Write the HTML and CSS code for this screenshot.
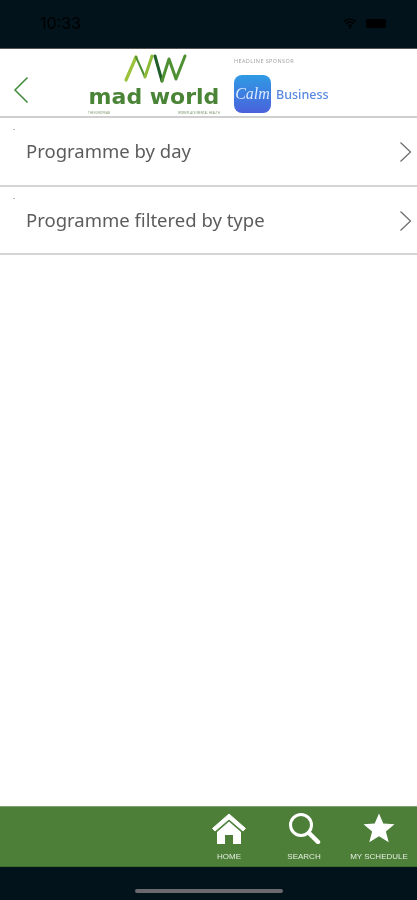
FILE: index.html
```html
<!DOCTYPE html>
<html lang="en">
<head>
<meta charset="utf-8">
<title>Programme</title>
<link rel="stylesheet" href="styles.css">
</head>
<body>
<div class="app">
  <div class="status">
    <span class="clock">10:33</span>
    <span class="status-icons">
      <svg class="wifi" width="14" height="11" viewBox="0 0 14 11"><path d="M1 3.6C4.6.4 9.4.4 13 3.6M3 5.8C5.4 3.8 8.6 3.8 11 5.8M5 8C6.2 7 7.8 7 9 8" fill="none" stroke="#000" stroke-width="1.5"/><circle cx="7" cy="9.6" r="1.1" fill="#000"/></svg>
      <span class="battery"></span>
    </span>
  </div>
  <header class="header">
    <svg class="back" width="16" height="28" viewBox="0 0 16 28"><path d="M14.5 1.5 2 14l12.500 12.500" fill="none" stroke="#3f8a38" stroke-width="1.500"/></svg>
    <div class="logo">
      <svg class="logo-mark" width="64" height="30" viewBox="0 0 64 30">
        <path d="M3 27 13 4" fill="none" stroke="#9cc23c" stroke-width="3.200" stroke-linecap="round"/>
        <path d="M13 4 22 24" fill="none" stroke="#4f8f30" stroke-width="2" stroke-linecap="round"/>
        <path d="M22 24 29 3" fill="none" stroke="#8dbb38" stroke-width="3" stroke-linecap="round"/>
        <path d="M32 3 39 28" fill="none" stroke="#1f5e2a" stroke-width="3" stroke-linecap="round"/>
        <path d="M39 28 46 6 53 26 62 3" fill="none" stroke="#4f9032" stroke-width="3" stroke-linecap="round" stroke-linejoin="round"/>
      </svg>
      <div class="logo-word">mad world</div>
      <div class="logo-sub"><span>THE EUROPEAN</span><span>WORKPLACE MENTAL HEALTH</span></div>
    </div>
    <div class="sponsor">
      <div class="sponsor-label">HEADLINE SPONSOR</div>
      <div class="sponsor-row">
        <div class="calm">Calm</div>
        <div class="business">Business</div>
      </div>
    </div>
  </header>
  <main class="list">
    <a class="row"><span class="row-text">Programme by day</span>
      <svg class="chev" width="13" height="22" viewBox="0 0 13 22"><path d="M1.500 1.500 11.500 11 1.500 20.500" fill="none" stroke="#6e6e6e" stroke-width="1.300"/></svg></a>
    <a class="row"><span class="row-text">Programme filtered by type</span>
      <svg class="chev" width="13" height="22" viewBox="0 0 13 22"><path d="M1.500 1.500 11.500 11 1.500 20.500" fill="none" stroke="#6e6e6e" stroke-width="1.300"/></svg></a>
  </main>
  <nav class="tabs">
    <div class="tab">
      <svg width="36" height="32" viewBox="0 0 36 32"><path d="M18 2 1.500 16.500l2.500 2.500L18 7l14 12 2.500-2.500Z" fill="#fff" stroke="#fff" stroke-linejoin="round"/><path d="M6 20 18 9.500 30 20V32H22V23H14V32H6Z" fill="#fff"/></svg>
      <span>HOME</span>
    </div>
    <div class="tab">
      <svg width="34" height="32" viewBox="0 0 34 32"><circle cx="14" cy="13" r="10.500" fill="none" stroke="#fff" stroke-width="3"/><path d="M22 21 31 30" stroke="#fff" stroke-width="4.500" stroke-linecap="round"/></svg>
      <span>SEARCH</span>
    </div>
    <div class="tab">
      <svg width="34" height="32" viewBox="0 0 34 32"><path d="M17 1.500 21.300 11.500l11.200.8-8.600 7.100 2.800 10.800L17 24.300l-9.700 5.900 2.800-10.800-8.600-7.100 11.200-.8Z" fill="#fff"/></svg>
      <span>MY SCHEDULE</span>
    </div>
  </nav>
  <div class="home-area"><div class="home-bar"></div></div>
</div>
</body>
</html>
```
FILE: styles.css
```css
* { box-sizing: border-box; }
html, body { margin: 0; padding: 0; background: #fff; }
.app {
  width: 417px;
  height: 900px;
  display: flex;
  flex-direction: column;
  overflow: hidden;
  font-family: "Noto Sans", sans-serif;
}
.status {
  height: 49px;
  flex: none;
  background: #02131b;
  border-bottom: 1px solid #555;
  display: flex;
  align-items: center;
  justify-content: space-between;
  padding: 0 31px 1px 40px;
}
.clock { font-size: 16px; color: #000; font-family: "Inter", sans-serif; margin-top: -1px; filter: blur(.5px); }
.status-icons { display: flex; align-items: center; gap: 9px; }
.battery { width: 20px; height: 9px; background: #000; border-radius: 2px; }
.header {
  height: 69px;
  flex: none;
  background: #fff;
  border-bottom: 2px solid #cfcfcf;
  display: flex;
  align-items: flex-start;
  padding-left: 13px;
}
.back { margin-top: 27px; flex: none; }
.logo {
  width: 134px;
  margin-left: 58px;
  display: flex;
  flex-direction: column;
  align-items: center;
  padding-top: 4px;
  filter: blur(.4px);
}
.logo-mark { margin-left: 2px; flex: none; }
.logo-word {
  font-family: "DejaVu Sans", sans-serif;
  font-weight: 700;
  font-size: 22px;
  line-height: 26px;
  color: #4a8436;
  margin-top: 1px;
  white-space: nowrap;
}
.logo-sub {
  width: 132px;
  display: flex;
  justify-content: space-between;
  font-size: 3px;
  line-height: 4px;
  margin-top: 1px;
  color: #7d9b70;
}
.sponsor { margin-left: 13px; padding-top: 8px; filter: blur(.4px); }
.sponsor-label { font-size: 5.500px; line-height: 8px; color: #a3a3a3; letter-spacing: .4px; white-space: nowrap; }
.sponsor-row { display: flex; align-items: center; gap: 5px; margin-top: 10px; }
.calm {
  width: 37px;
  height: 38px;
  border-radius: 8px;
  background: linear-gradient(#2f9be4, #4a62dc);
  color: #dce9ff;
  font-family: "Liberation Serif", serif;
  font-style: italic;
  font-size: 16px;
  line-height: 38px;
  text-align: center;
}
.business { font-size: 12.500px; font-weight: 500; color: #5a8ae0; margin-top: 1px; }
.list { flex: 1; background: #fff; }
.row {
  position: relative;
  height: 68.500px;
  display: flex;
  align-items: center;
  justify-content: space-between;
  padding: 0 5px 0 26px;
  border-bottom: 2px solid #d4d4d4;
}
.row::before {
  content: "";
  position: absolute;
  left: 13px;
  top: 11px;
  width: 2px;
  height: 1px;
  background: #bbb;
}
.row-text {
  font-family: "Noto Sans", sans-serif;
  font-weight: 400;
  font-size: 18.500px;
  color: #5c5c5c;
  margin-top: -1px;
  filter: blur(.3px);
}
.chev { margin-top: 2px; }
.tabs {
  height: 61px;
  flex: none;
  background: #4d7f39;
  border-top: 1px solid #7fa070;
  border-bottom: 1px solid #3f6a30;
  display: flex;
  justify-content: flex-end;
  padding: 5px 9px 0 0;
  gap: 0;
}
.tab {
  display: flex;
  flex-direction: column;
  align-items: center;
  width: 0;
  flex: none;
  margin-right: 75px;
  color: #e4eee0;
  font-family: "Liberation Sans", sans-serif;
  font-size: 8px;
  line-height: 10px;
  white-space: nowrap;
}
.tab:last-child { margin-right: 29px; }
.tab svg { flex: none; height: 32px; }
.tab span { margin-top: 8px; filter: blur(.3px); }
.home-area {
  height: 33px;
  flex: none;
  background: #02131b;
  display: flex;
  justify-content: center;
  padding-top: 22px;
}
.home-bar { width: 148px; height: 4px; border-radius: 2px; background: #6a6a6e; }
```
